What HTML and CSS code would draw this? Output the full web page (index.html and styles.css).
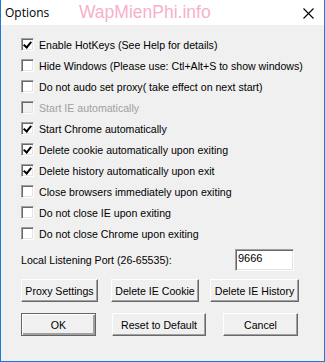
FILE: index.html
```
<!DOCTYPE html>
<html lang="en">
<head>
    <meta charset="UTF-8">
    <meta name="viewport" content="width=device-width, initial-scale=1.0">
    <title>Options</title>
    <link rel="stylesheet" href="styles.css">
</head>
<body>
    <div class="window">
        <div class="titlebar">
            <span class="title">Options</span>
            <span class="watermark">WapMienPhi.info</span>
            <svg class="close" width="11" height="11" viewBox="0 0 11 11">
                <path d="M0.5 0.5 L10.5 10.5 M10.5 0.5 L0.5 10.5" stroke="#000" stroke-width="1.1" fill="none"/>
            </svg>
        </div>
        <div class="content">
            <div class="options">
                <label class="option"><span class="box checked"></span>Enable HotKeys (See Help for details)</label>
                <label class="option"><span class="box"></span>Hide Windows (Please use: Ctl+Alt+S to show windows)</label>
                <label class="option"><span class="box"></span>Do not audo set proxy( take effect on next start)</label>
                <label class="option disabled"><span class="box"></span>Start IE automatically</label>
                <label class="option"><span class="box checked"></span>Start Chrome automatically</label>
                <label class="option"><span class="box checked"></span>Delete cookie automatically upon exiting</label>
                <label class="option"><span class="box checked"></span>Delete history automatically upon exit</label>
                <label class="option"><span class="box"></span>Close browsers immediately upon exiting</label>
                <label class="option"><span class="box"></span>Do not close IE upon exiting</label>
                <label class="option"><span class="box"></span>Do not close Chrome upon exiting</label>
            </div>
            <div class="port-row">
                <span class="port-label">Local Listening Port (26-65535):</span>
                <div class="port-input">9666</div>
            </div>
            <div class="button-row">
                <button class="btn proxy">Proxy Settings</button>
                <button class="btn cookie">Delete IE Cookie</button>
                <button class="btn history">Delete IE History</button>
            </div>
            <div class="button-row bottom">
                <button class="btn ok">OK</button>
                <button class="btn reset">Reset to Default</button>
                <button class="btn cancel">Cancel</button>
            </div>
        </div>
    </div>
</body>
</html>
```

FILE: styles.css
```
body {
    margin: 0;
    font-family: "Liberation Sans", Arial, sans-serif;
    font-size: 10.6px;
    color: #000;
}
.window {
    width: 325px;
    height: 362px;
    box-sizing: border-box;
    border: 1px solid #1a7ad4;
    border-top: none;
    background: #f0f0f0;
    display: flex;
    flex-direction: column;
}
.titlebar {
    height: 25px;
    background: #fff;
    display: flex;
    align-items: center;
    position: relative;
}
.title {
    font-family: "Open Sans", "Liberation Sans", sans-serif;
    font-size: 12px;
    margin-left: 4px;
}
.watermark {
    position: absolute;
    left: 78px;
    top: 2px;
    font-family: "Liberation Sans", sans-serif;
    font-size: 17.5px;
    color: #f7b0cc;
}
.close {
    position: absolute;
    right: 10px;
    top: 8px;
}
.content {
    padding: 9px 0 0 20px;
}
.option {
    display: flex;
    align-items: center;
    height: 21px;
    white-space: nowrap;
}
.option.disabled {
    color: #a0a0a0;
}
.box {
    width: 13px;
    height: 13px;
    box-sizing: border-box;
    border: 1px solid;
    border-color: #a0a0a0 #fff #fff #a0a0a0;
    box-shadow: inset 1px 1px #696969, inset -1px -1px #e3e3e3;
    background: #fff;
    margin-right: 5px;
    flex-shrink: 0;
    position: relative;
}
.disabled .box {
    background: #f0f0f0;
}
.box.checked::after {
    content: "";
    position: absolute;
    left: 3px;
    top: 1px;
    width: 3px;
    height: 6px;
    border: solid #000;
    border-width: 0 2px 2px 0;
    transform: rotate(40deg);
}
.port-row {
    display: flex;
    align-items: center;
    margin-top: 5px;
    height: 22px;
}
.port-label {
    width: 214px;
    flex-shrink: 0;
}
.port-input {
    width: 59px;
    height: 22px;
    box-sizing: border-box;
    border: 1px solid;
    border-color: #a0a0a0 #fff #fff #a0a0a0;
    box-shadow: inset 1px 1px #696969, inset -1px -1px #e3e3e3;
    background: #fff;
    padding: 2px 0 0 2px;
    font-size: 11px;
}
.button-row {
    display: flex;
    margin-top: 8px;
}
.button-row.bottom {
    margin-top: 11px;
}
.btn {
    height: 23px;
    box-sizing: border-box;
    font-family: "Liberation Sans", Arial, sans-serif;
    font-size: 10.6px;
    background: #f0f0f0;
    border: 1px solid;
    border-color: #fff #696969 #696969 #fff;
    box-shadow: inset -1px -1px #a0a0a0;
    padding: 0;
    color: #000;
}
.proxy { width: 77px; }
.cookie { width: 88px; margin-left: 13px; }
.history { width: 89px; margin-left: 11px; }
.ok {
    width: 75px;
    border: 1px solid #646464;
    box-shadow: inset 1px 1px #fff, inset -2px -2px #a0a0a0;
}
.reset { width: 94px; margin-left: 16px; }
.cancel { width: 75px; margin-left: 17px; }
```
